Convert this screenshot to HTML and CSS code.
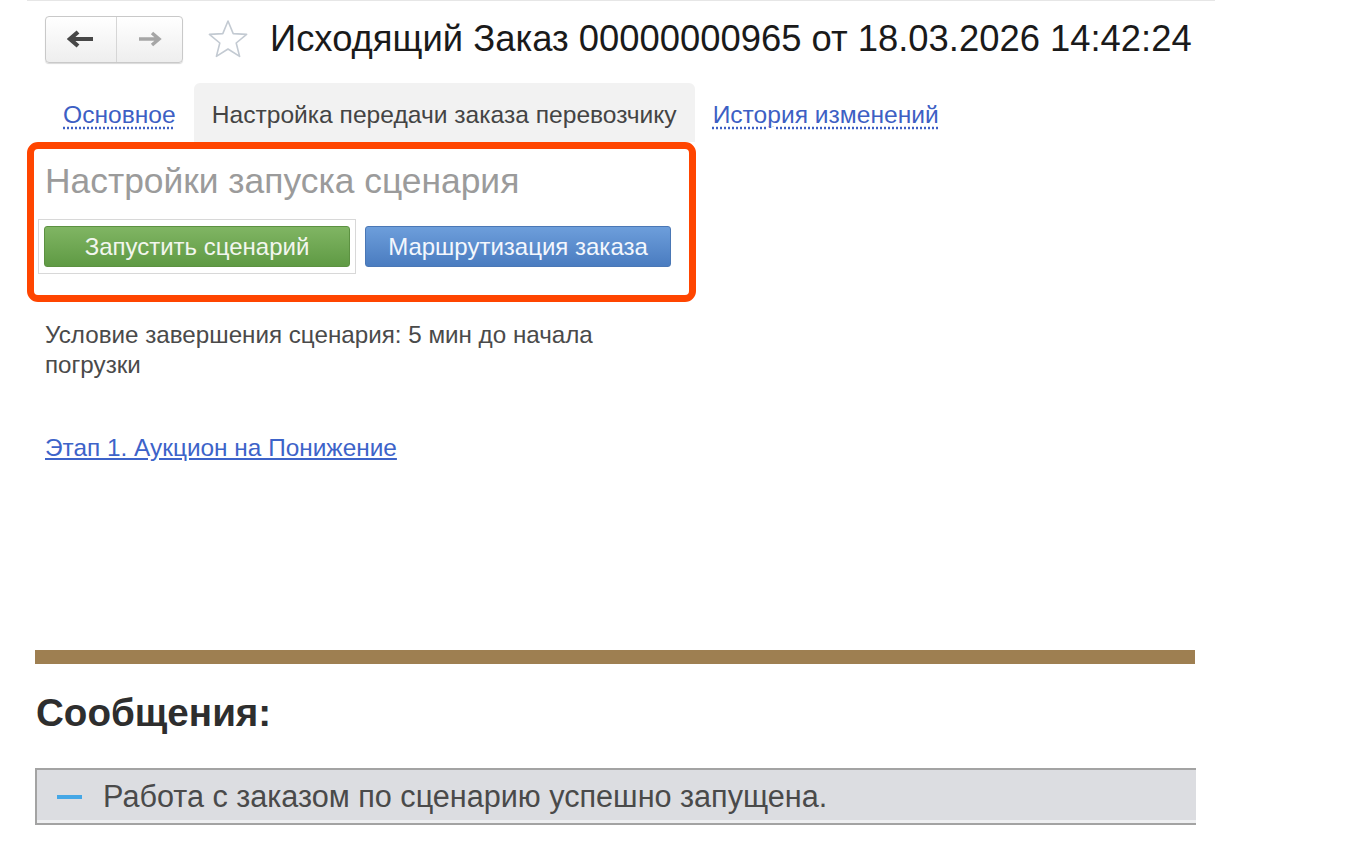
FILE: index.html
```html
<!DOCTYPE html>
<html lang="ru">
<head>
    <meta charset="UTF-8">
    <title>Исходящий Заказ 00000000965</title>
    <link rel="stylesheet" href="styles.css">
</head>
<body>
    <div class="page">
        <div class="topline"></div>

        <!-- Header: navigation, favourite, title -->
        <div class="header">
            <div class="nav">
                <button class="nav-btn back" type="button">
                    <svg width="28" height="18" viewBox="0 0 28 18"><path d="M3 9 H26 M11 2 L3 9 L11 16" fill="none" stroke="#474747" stroke-width="4.2" stroke-linejoin="miter"/></svg>
                </button>
                <button class="nav-btn forward" type="button">
                    <svg width="26" height="16" viewBox="0 0 26 16"><path d="M2 8 H22 M15 2 L22 8 L15 14" fill="none" stroke="#a6a6a6" stroke-width="3.5"/></svg>
                </button>
            </div>
            <svg class="star" width="42" height="40" viewBox="0 0 42 40"><path d="M21 2 L26.2 14.6 L39.6 15.4 L29.2 24 L32.6 37.4 L21 30 L9.4 37.4 L12.8 24 L2.4 15.4 L15.8 14.6 Z" fill="none" stroke="#c3cad2" stroke-width="1.6" stroke-linejoin="round"/></svg>
            <h1 class="title">Исходящий Заказ 00000000965 от 18.03.2026 14:42:24</h1>
        </div>

        <!-- Tabs -->
        <div class="tabs">
            <a class="tab" href="#">Основное</a>
            <span class="tab active">Настройка передачи заказа перевозчику</span>
            <a class="tab" href="#">История изменений</a>
        </div>

        <!-- Highlighted group -->
        <div class="highlight">
            <h2 class="group-title">Настройки запуска сценария</h2>
            <div class="actions">
                <div class="focus-frame">
                    <button class="btn btn-green" type="button">Запустить сценарий</button>
                </div>
                <button class="btn btn-blue" type="button">Маршрутизация заказа</button>
            </div>
        </div>

        <p class="condition">Условие завершения сценария: 5 мин до начала<br>погрузки</p>

        <a class="stage-link" href="#">Этап 1. Аукцион на Понижение</a>

        <div class="divider"></div>

        <h3 class="messages-title">Сообщения:</h3>

        <div class="message">
            <span class="dash"></span>
            <span class="message-text">Работа с заказом по сценарию успешно запущена.</span>
        </div>
    </div>
</body>
</html>
```

FILE: styles.css
```css
/* Global */
body {
    margin: 0;
    background: #ffffff;
    font-family: "Liberation Sans", Arial, sans-serif;
    color: #333;
}

.page {
    padding-left: 27px;
    width: 1188px;
}

.topline {
    height: 1px;
    background: #e6e6e6;
}

/* Header */
.header {
    display: flex;
    align-items: center;
    margin: 14px 0 0 18px;
    height: 48px;
}

.nav {
    display: flex;
    width: 138px;
    height: 47px;
    box-sizing: border-box;
    border: 1px solid #c9c9c9;
    border-radius: 4px;
    background: linear-gradient(#ffffff, #eeeeee);
    box-shadow: 0 1px 1px rgba(0, 0, 0, 0.15);
    overflow: hidden;
}

.nav-btn {
    border: none;
    background: transparent;
    padding: 0;
    display: flex;
    align-items: center;
    justify-content: center;
}

.nav-btn.back {
    width: 71px;
    border-right: 1px solid #d6d6d6;
}

.nav-btn.forward {
    flex: 1;
}

.star {
    margin-left: 24px;
}

.title {
    margin: 0 0 0 21px;
    font-size: 36.4px;
    line-height: 44px;
    font-weight: normal;
    color: #1a1a1a;
    white-space: nowrap;
}

/* Tabs */
.tabs {
    display: flex;
    margin: 20px 0 0 18px;
    height: 59px;
}

.tab {
    display: flex;
    align-items: center;
    padding: 5px 18px 0;
    font-size: 24.6px;
    color: #444;
    white-space: nowrap;
}

a.tab {
    color: #3d5fc4;
    text-decoration: underline dotted;
    text-underline-offset: 4px;
}

.tab.active {
    background: #f2f2f2;
    border-radius: 6px 6px 0 0;
}

/* Highlighted group */
.highlight {
    width: 669px;
    height: 160px;
    box-sizing: border-box;
    border: 7px solid #ff4500;
    border-radius: 11px;
    padding: 12px 0 0 11px;
}

.group-title {
    margin: 0;
    font-size: 35.4px;
    line-height: 40px;
    font-weight: normal;
    color: #9b9b9b;
    white-space: nowrap;
}

.actions {
    display: flex;
    align-items: center;
    gap: 9px;
    margin: 18px 0 0 -7px;
}

.focus-frame {
    padding: 6px 5px;
    border: 1px solid #d8d8d8;
}

.btn {
    width: 306px;
    height: 41px;
    padding: 0;
    border-radius: 3px;
    font-family: "Liberation Sans", Arial, sans-serif;
    font-size: 24px;
    color: #f2f6ee;
    cursor: pointer;
}

.btn-green {
    background: linear-gradient(#80b563, #5f9a44);
    border: 1px solid #5c9141;
}

.btn-blue {
    background: linear-gradient(#6d9edb, #4a7cc0);
    border: 1px solid #4a77b5;
    color: #f3f7fd;
}

/* Content */
.condition {
    margin: 18px 0 0 18px;
    font-size: 24.2px;
    line-height: 30px;
    color: #4a4a4a;
    white-space: nowrap;
}

.stage-link {
    display: inline-block;
    margin: 53px 0 0 18px;
    font-size: 24.4px;
    line-height: 30px;
    color: #3d63c9;
}

.divider {
    margin: 187px 0 0 8px;
    width: 1160px;
    height: 14px;
    background: #9e7f51;
}

.messages-title {
    margin: 30px 0 0 9px;
    font-size: 38.6px;
    line-height: 38px;
    color: #2e2e2e;
}

/* Message box */
.message {
    display: flex;
    align-items: center;
    margin: 36px 0 0 8px;
    width: 1161px;
    height: 57px;
    box-sizing: border-box;
    background: #dcdde1;
    border: 2px solid #a3a3a3;
    border-right: none;
    box-shadow: inset 0 -3px 0 #eeeff1;
}

.dash {
    width: 25px;
    height: 4px;
    margin-left: 20px;
    background: #45a7e6;
}

.message-text {
    margin-left: 21px;
    font-size: 30.6px;
    color: #4a4a4a;
    white-space: nowrap;
}
```
